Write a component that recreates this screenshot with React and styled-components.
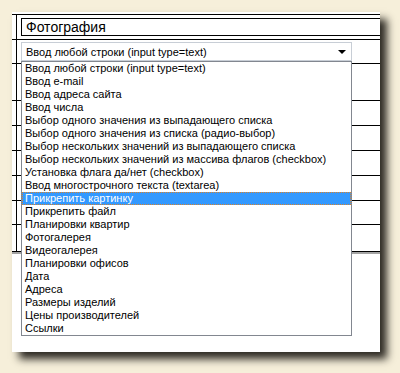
import React from "react";
import styled, { createGlobalStyle } from "styled-components";

const GlobalStyle = createGlobalStyle`
  html, body {
    margin: 0;
    padding: 0;
    background: #f6efda;
  }
  body {
    font-family: "Liberation Sans", Arial, sans-serif;
    width: 400px;
    height: 373px;
    overflow: hidden;
  }
`;

const Stage = styled.div`
  width: 400px;
  height: 373px;
  padding: 12px 0 0 12px;
  box-sizing: border-box;
`;

const Sheet = styled.div`
  width: 368px;
  height: 340px;
  background: #fff;
  padding-top: 2px;
  box-sizing: border-box;
  box-shadow: 7px 7px 8px rgba(35, 32, 26, 0.95);
  overflow: hidden;
`;

const Table = styled.div`
  border-top: 1px solid #000;
  border-bottom: 2px solid #a4a4a4;
`;

const Row = styled.div`
  display: flex;
  height: ${(p) => p.h}px;
  border-bottom: 1px solid #000;
`;

const Gutter = styled.div`
  width: 4px;
  flex: none;
  border-right: 1px solid #000;
`;

const Cell = styled.div`
  position: relative;
  flex: 1;
  min-width: 0;
`;

const TitleInput = styled.div`
  margin: 3px 0 0 4px;
  width: 400px;
  height: 18px;
  border: 1px solid #000;
  box-sizing: border-box;
  padding-left: 4px;
  font-size: 14px;
  line-height: 16px;
  color: #000;
  white-space: nowrap;
`;

const SelectBox = styled.div`
  margin: 2px 0 0 4px;
  width: 331px;
  height: 19px;
  border: 1px solid #c8ced6;
  box-sizing: border-box;
  display: flex;
  align-items: center;
  justify-content: space-between;
  padding: 0 5px 0 4px;
  font-size: 11px;
  color: #000;
  background: #fff;
`;

const Arrow = styled.span`
  width: 0;
  height: 0;
  border-left: 4px solid transparent;
  border-right: 4px solid transparent;
  border-top: 4px solid #000;
  margin-top: 1px;
`;

const DropList = styled.ul`
  position: absolute;
  top: 21px;
  left: 4px;
  width: 331px;
  margin: 0;
  padding: 0;
  list-style: none;
  border: 1px solid #828790;
  background: #fff;
  box-sizing: border-box;
  z-index: 2;
`;

const Option = styled.li`
  height: 13px;
  font-size: 11px;
  line-height: 11px;
  padding-left: 2px;
  white-space: nowrap;
  box-sizing: border-box;
  color: ${(p) => (p.active ? "#fff" : "#000")};
  background: ${(p) => (p.active ? "#3399ff" : "#fff")};
  border: 1px dotted ${(p) => (p.active ? "#d9822b" : "transparent")};
`;

const options = [
  "Ввод любой строки (input type=text)",
  "Ввод e-mail",
  "Ввод адреса сайта",
  "Ввод числа",
  "Выбор одного значения из выпадающего списка",
  "Выбор одного значения из списка (радио-выбор)",
  "Выбор нескольких значений из выпадающего списка",
  "Выбор нескольких значений из массива флагов (checkbox)",
  "Установка флага да/нет (checkbox)",
  "Ввод многострочного текста (textarea)",
  "Прикрепить картинку",
  "Прикрепить файл",
  "Планировки квартир",
  "Фотогалерея",
  "Видеогалерея",
  "Планировки офисов",
  "Дата",
  "Адреса",
  "Размеры изделий",
  "Цены производителей",
  "Ссылки",
];

const lowerRows = [36, 24, 24, 24, 24, 23, 26];

const App = () => {
  return (
    <Stage>
      <GlobalStyle />
      <Sheet>
        <Table>
          <Row h={24}>
            <Gutter />
            <Cell>
              <TitleInput>Фотография</TitleInput>
            </Cell>
          </Row>
          <Row h={23}>
            <Gutter />
            <Cell>
              <SelectBox>
                <span>{options[0]}</span>
                <Arrow />
              </SelectBox>
              <DropList>
                {options.map((o, i) => (
                  <Option key={o} active={i === 10}>
                    {o}
                  </Option>
                ))}
              </DropList>
            </Cell>
          </Row>
          {lowerRows.map((h, i) => (
            <Row key={i} h={h}>
              <Gutter />
              <Cell />
            </Row>
          ))}
        </Table>
      </Sheet>
    </Stage>
  );
};

export default App;
